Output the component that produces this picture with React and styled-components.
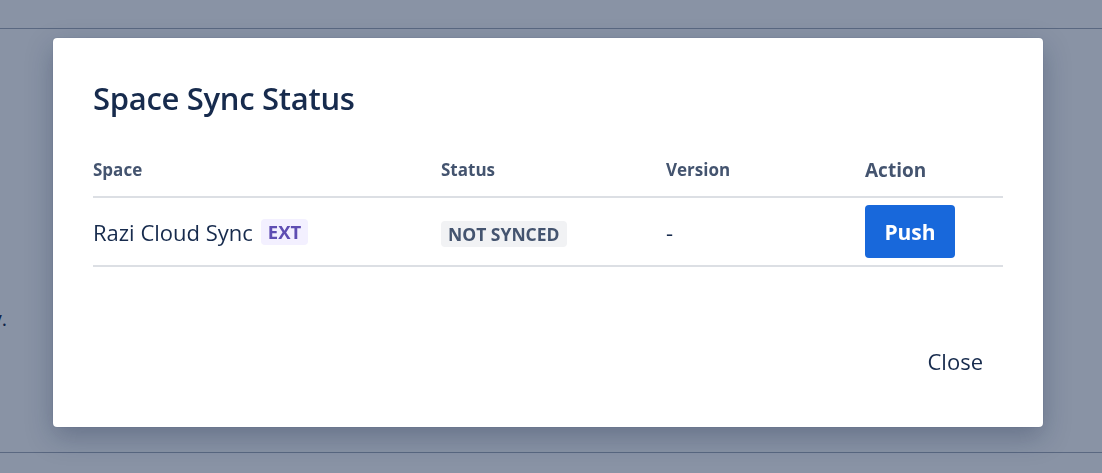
import React from 'react';
import styled, { createGlobalStyle } from 'styled-components';

const GlobalStyle = createGlobalStyle`
  html, body {
    margin: 0;
    padding: 0;
    background: #ffffff;
    font-family: "Open Sans", "Noto Sans", Arial, sans-serif;
    color: #172B4D;
    overflow: hidden;
  }
`;

const spaces = [
  { name: 'Razi Cloud Sync', external: true, status: 'Not synced', version: '-' },
];

const App = () => {
  return (
    <>
      <GlobalStyle />
      <StyledPage>
        <StyledTopBar />
        <StyledMain>
          <StyledBehindLine>
            <span>Keep your space content in sync with the cloud copy.</span>
          </StyledBehindLine>
        </StyledMain>
        <StyledBottomBar />
      </StyledPage>

      <StyledOverlay>
        <StyledModal role="dialog" aria-labelledby="sync-title">
          <StyledHeader>
            <StyledTitle id="sync-title">Space Sync Status</StyledTitle>
          </StyledHeader>
          <StyledBody>
            <StyledTable>
              <thead>
                <tr>
                  <StyledTh $width={348}>Space</StyledTh>
                  <StyledTh $width={225}>Status</StyledTh>
                  <StyledTh $width={199}>Version</StyledTh>
                  <StyledTh $large>Action</StyledTh>
                </tr>
              </thead>
              <tbody>
                {spaces.map((space, index) => (
                  <tr key={index}>
                    <StyledTd>
                      <StyledSpaceName>
                        {space.name}
                        {space.external && <StyledLozenge $tone="purple">EXT</StyledLozenge>}
                      </StyledSpaceName>
                    </StyledTd>
                    <StyledTd>
                      <StyledLozenge $tone="grey">{space.status}</StyledLozenge>
                    </StyledTd>
                    <StyledTd>{space.version}</StyledTd>
                    <StyledTd>
                      <StyledPrimaryButton type="button">Push</StyledPrimaryButton>
                    </StyledTd>
                  </tr>
                ))}
              </tbody>
            </StyledTable>
          </StyledBody>
          <StyledFooter>
            <StyledSubtleButton type="button">Close</StyledSubtleButton>
          </StyledFooter>
        </StyledModal>
      </StyledOverlay>
    </>
  );
};

export default App;

const StyledPage = styled.div`
  height: 473px;
  display: flex;
  flex-direction: column;
`;

const StyledTopBar = styled.div`
  height: 28px;
  border-bottom: 1px solid #A5ADBA;
`;

const StyledMain = styled.div`
  flex: 1;
  padding-top: 276px;
`;

const StyledBehindLine = styled.div`
  width: 7px;
  display: flex;
  justify-content: flex-end;
  white-space: nowrap;
  font-size: 20px;
  color: #172B4D;
`;

const StyledBottomBar = styled.div`
  height: 20px;
  border-top: 1px solid #A5ADBA;
`;

const StyledOverlay = styled.div`
  position: fixed;
  inset: 0;
  background: rgba(9, 30, 66, 0.48);
  display: flex;
  align-items: flex-start;
  padding: 38px 0 0 53px;
`;

const StyledModal = styled.section`
  width: 990px;
  background: #ffffff;
  border-radius: 4px;
  box-shadow: 0 10px 28px rgba(9, 30, 66, 0.28), 0 0 1px rgba(9, 30, 66, 0.31);
  display: flex;
  flex-direction: column;
`;

const StyledHeader = styled.header`
  padding: 41px 40px 0;
`;

const StyledTitle = styled.h1`
  margin: 0;
  font-size: 31px;
  line-height: 38px;
  font-weight: 600;
  color: #172B4D;
  letter-spacing: -0.3px;
`;

const StyledBody = styled.div`
  padding: 37px 40px 0;
`;

const StyledTable = styled.table`
  width: 100%;
  border-collapse: collapse;
  border-bottom: 2px solid #DCDFE4;
`;

const StyledTh = styled.th`
  width: ${props => (props.$width ? `${props.$width}px` : 'auto')};
  padding: 4px 0 14px;
  text-align: left;
  font-size: ${props => (props.$large ? '19px' : '17px')};
  line-height: 24px;
  font-weight: 700;
  color: #44546F;
  border-bottom: 2px solid #DCDFE4;
`;

const StyledTd = styled.td`
  padding: 7px 0;
  height: 53px;
  vertical-align: middle;
  font-size: 22px;
  color: #172B4D;
`;

const StyledSpaceName = styled.div`
  display: flex;
  align-items: center;
  gap: 8px;
`;

const StyledLozenge = styled.span`
  display: inline-flex;
  align-items: center;
  height: 26px;
  padding: 0 7px;
  border-radius: 4px;
  font-size: ${props => (props.$tone === 'purple' ? '18.5px' : '17.5px')};
  font-weight: 700;
  text-transform: uppercase;
  background: ${props => (props.$tone === 'purple' ? '#F3F0FF' : '#F1F2F4')};
  color: ${props => (props.$tone === 'purple' ? '#5E4DB2' : '#44546F')};
`;

const StyledPrimaryButton = styled.button`
  height: 53px;
  width: 90px;
  padding: 0;
  border: none;
  border-radius: 4px;
  background: #1868DB;
  color: #ffffff;
  font-family: inherit;
  font-size: 21px;
  font-weight: 700;
  cursor: pointer;
`;

const StyledFooter = styled.footer`
  display: flex;
  justify-content: flex-end;
  padding: 70px 40px 42px;
`;

const StyledSubtleButton = styled.button`
  height: 48px;
  padding: 0 20px;
  border: none;
  border-radius: 4px;
  background: transparent;
  color: #172B4D;
  font-family: inherit;
  font-size: 22px;
  font-weight: 400;
  cursor: pointer;
`;
